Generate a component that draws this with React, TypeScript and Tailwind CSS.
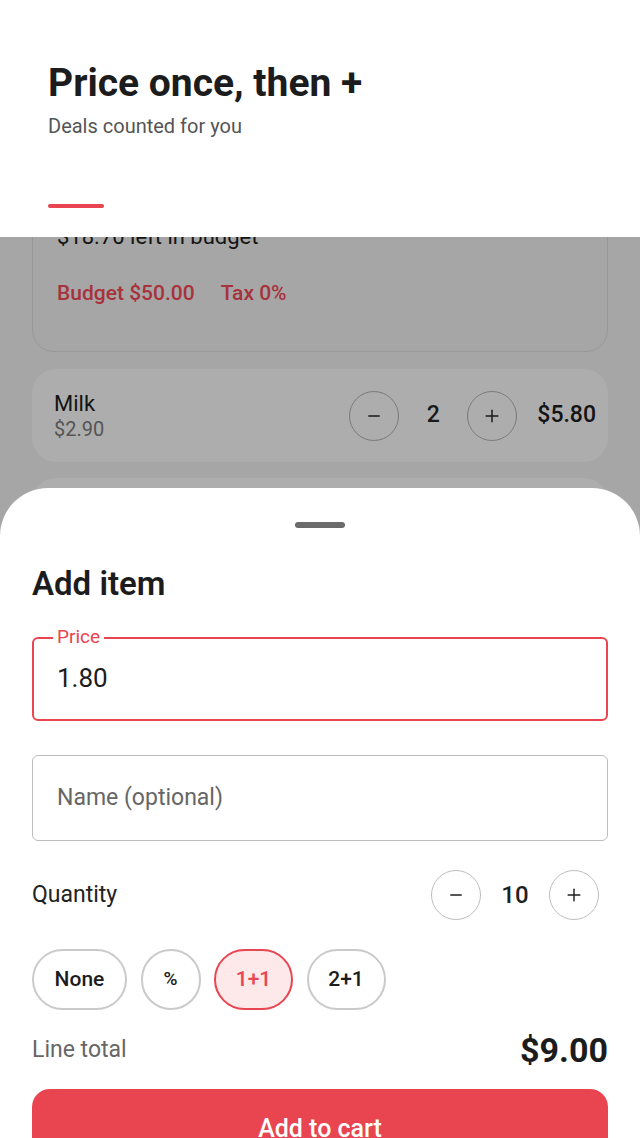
import { Minus, Plus } from 'lucide-react';

function Stepper({ value, dim, size }: { value: string; dim?: boolean; size: string }) {
  const ring = dim ? 'border-[#7a7a7a]' : 'border-[#bdbdbd]';
  const ink = dim ? 'text-[#1a1a1a]' : 'text-[#1f1f1f]';
  return (
    <div className="flex items-center">
      <div className={`w-[50px] h-[50px] rounded-full border ${ring} flex items-center justify-center ${ink}`}>
        <Minus className="w-[18px] h-[18px]" strokeWidth={1.75} />
      </div>
      <div className={`w-[68px] text-center font-medium ${size} ${ink}`}>{value}</div>
      <div className={`w-[50px] h-[50px] rounded-full border ${ring} flex items-center justify-center ${ink}`}>
        <Plus className="w-[20px] h-[20px]" strokeWidth={1.75} />
      </div>
    </div>
  );
}

export default function App() {
  const chips = ['None', '%', '1+1', '2+1'];

  return (
    <div className="relative w-[640px] h-[1138px] overflow-hidden bg-[#a6a6a6] font-['Roboto',sans-serif]">
      {/* Header */}
      <div className="relative z-10 h-[237px] bg-white px-12 pt-[60px]">
        <h1 className="text-[39px] leading-[46px] font-bold text-[#1c1c1c]">Price once, then +</h1>
        <p className="mt-[8px] text-[20px] leading-[24px] text-[#555]">Deals counted for you</p>
        <div className="mt-[66px] w-14 h-1 rounded-full bg-[#e84550]"></div>
      </div>

      {/* Dimmed list */}
      <div className="px-8">
        <div className="-mt-[30px] h-[145px] rounded-[22px] border border-[#999] px-6 pt-[15px]">
          <p className="text-[22px] leading-[28px] text-[#141414]">$18.70 left in budget</p>
          <div className="mt-[27px] flex gap-[26px] text-[21px] font-medium text-[#a8323c]">
            <span>Budget $50.00</span>
            <span>Tax 0%</span>
          </div>
        </div>

        <div className="mt-[17px] h-[93px] rounded-[24px] bg-[#adadad] pl-[22px] pr-3 flex items-center justify-between">
          <div>
            <p className="text-[22px] leading-[26px] text-[#141414]">Milk</p>
            <p className="text-[20px] leading-[24px] text-[#555]">$2.90</p>
          </div>
          <div className="flex items-center gap-5">
            <Stepper value="2" dim size="text-[23px]" />
            <span className="text-[23px] font-medium text-[#141414]">$5.80</span>
          </div>
        </div>

        <div className="mt-[16px] h-[93px] rounded-[24px] bg-[#adadad]"></div>
      </div>

      {/* Bottom sheet */}
      <div className="absolute left-0 right-0 bottom-0 top-[488px] z-20 bg-white rounded-t-[48px] px-8">
        <div className="mx-auto mt-[34px] w-[50px] h-[6px] rounded-full bg-[#6b6b6b]"></div>

        <h2 className="mt-[38px] text-[33px] leading-[36px] font-semibold text-[#1c1c1c]">Add item</h2>

        <div className="relative mt-[35px] h-[84px] rounded-md border-2 border-[#e84550] px-[23px] flex items-center">
          <span className="absolute -top-[13px] left-[19px] bg-white px-[4px] text-[19px] leading-[22px] text-[#e84550]">Price</span>
          <span className="text-[26px] text-[#1c1c1c] -mt-[2px]">1.80</span>
        </div>

        <div className="mt-[34px] h-[86px] rounded-md border-[1.5px] border-[#bdbdbd] px-6 flex items-center">
          <span className="text-[23px] text-[#666]">Name (optional)</span>
        </div>

        <div className="mt-[29px] flex items-center justify-between pr-[9px]">
          <span className="text-[23px] text-[#222]">Quantity</span>
          <Stepper value="10" size="text-[24px]" />
        </div>

        <div className="mt-[29px] flex gap-[13.5px]">
          {chips.map((c) => {
            const on = c === '1+1';
            return (
              <div
                key={c}
                className={`h-[61px] rounded-full border-2 flex items-center justify-center font-medium ${
                  on ? 'bg-[#fde8ea] border-[#e84550] text-[#e84550]' : 'bg-white border-[#cacaca] text-[#1c1c1c]'
                } ${c === '%' ? 'w-[60px] text-[19px]' : c === 'None' ? 'w-[95px] text-[21px]' : 'w-[79px] text-[21px]'}`}
              >
                {c}
              </div>
            );
          })}
        </div>

        <div className="mt-[20px] h-[40px] flex items-center justify-between">
          <span className="text-[23px] text-[#666]">Line total</span>
          <span className="text-[34px] font-bold text-[#1c1c1c]">$9.00</span>
        </div>

        <button className="mt-[19px] w-full h-[80px] rounded-[18px] bg-[#e84550] text-white text-[25px] font-medium">
          Add to cart
        </button>
      </div>
    </div>
  );
}
